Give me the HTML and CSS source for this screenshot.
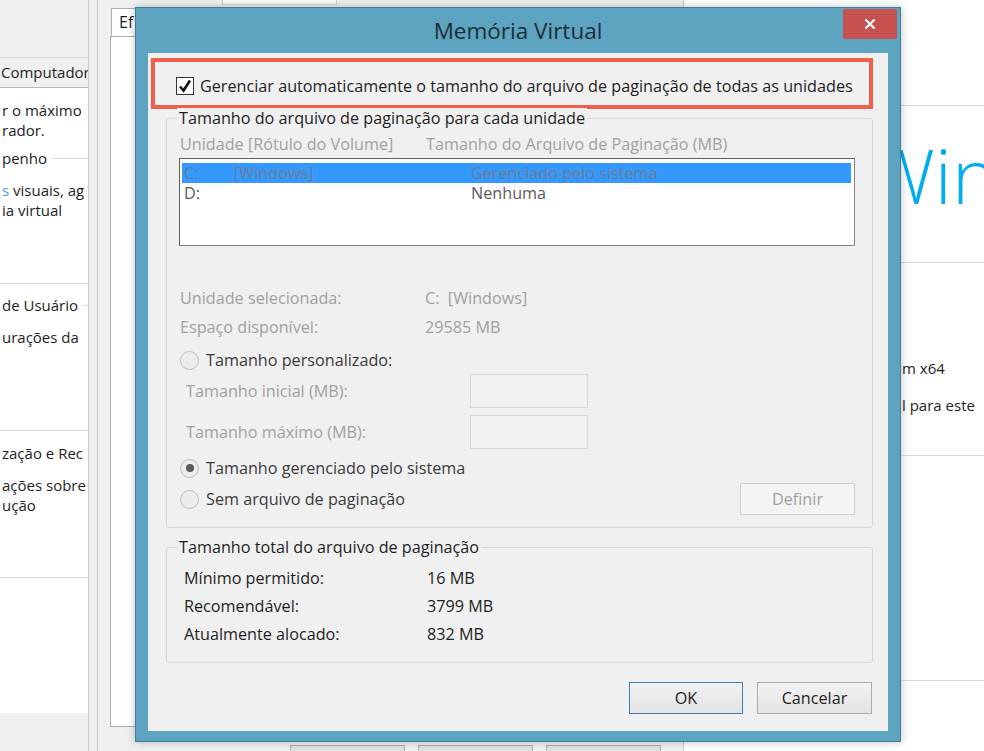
FILE: index.html
```html
<!DOCTYPE HTML>
<html>

<head>
    <meta charset="utf-8">
    <link rel="stylesheet" href="styles.css">
    <title>Memória Virtual</title>
</head>

<body>
    <!-- janela de tras, esquerda -->
    <div class="win win-left">
        <div class="left-top"></div>
        <div class="left-tabs">Computador</div>
        <div class="left-page">
            <div class="left-sec sec1">
                <p class="ln">r o máximo</p>
                <p class="ln">rador.</p>
                <p class="ln grp mt8">penho</p>
                <p class="ln mt12"><span class="link">s</span> visuais, ag</p>
                <p class="ln">ia virtual</p>
            </div>
            <div class="left-sec sec2">
                <p class="ln grp">de Usuário</p>
                <p class="ln mt12">urações da</p>
            </div>
            <div class="left-sec sec3">
                <p class="ln">zação e Rec</p>
                <p class="ln mt12">ações sobre</p>
                <p class="ln">ução</p>
            </div>
        </div>
    </div>

    <!-- janela de tras, meio -->
    <div class="win win-mid">
        <div class="mid-head"><span></span></div>
        <div class="mid-tab">Ef</div>
        <div class="mid-panel"></div>
        <div class="mid-buttons">
            <span></span>
            <span></span>
            <span></span>
        </div>
    </div>

    <!-- janela de tras, direita -->
    <div class="win win-right">
        <div class="r-sec r1"></div>
        <div class="r-sec r2"><p class="logo">Windows</p></div>
        <div class="r-sec r3">
            <p class="r-ln">m x64</p>
            <p class="r-ln mt17">l para este</p>
        </div>
        <div class="r-sec r4"></div>
    </div>

    <div class="dialog">
        <div class="titlebar">
            Memória Virtual
            <div class="close">
                <svg width="12" height="12" viewBox="0 0 12 12"><path d="M1.5 1.5 L10.5 10.5 M10.5 1.5 L1.5 10.5" stroke="#fff" stroke-width="2.2" fill="none"/></svg>
            </div>
        </div>
        <div class="client">
            <div class="highlight">
                <span class="checkbox">
                    <svg width="16" height="16" viewBox="0 0 16 16"><path d="M3 8.5 L6.5 12.5 L13 2.5" stroke="#111" stroke-width="2.6" fill="none"/></svg>
                </span>
                <span class="check-label">Gerenciar automaticamente o tamanho do arquivo de paginação de todas as unidades</span>
            </div>

            <div class="group g1">
                <div class="gtitle">Tamanho do arquivo de paginação para cada unidade</div>
                <div class="cols">
                    <span class="col-a">Unidade [Rótulo do Volume]</span>
                    <span>Tamanho do Arquivo de Paginação (MB)</span>
                </div>
                <div class="listbox">
                    <div class="lrow sel"><span class="c1">C:</span><span class="c2">[Windows]</span><span>Gerenciado pelo sistema</span></div>
                    <div class="lrow"><span class="c1">D:</span><span class="c2"></span><span>Nenhuma</span></div>
                </div>
                <div class="info mt42"><span class="info-l">Unidade selecionada:</span><span>C:&nbsp;&nbsp;[Windows]</span></div>
                <div class="info mt9"><span class="info-l">Espaço disponível:</span><span>29585 MB</span></div>
                <div class="opt mt13"><span class="radio"></span>Tamanho personalizado:</div>
                <div class="size mt4"><span class="size-l">Tamanho inicial (MB):</span><span class="textbox"></span></div>
                <div class="size mt7"><span class="size-l">Tamanho máximo (MB):</span><span class="textbox"></span></div>
                <div class="opt mt9"><span class="radio on"></span>Tamanho gerenciado pelo sistema</div>
                <div class="last-row">
                    <div class="opt"><span class="radio"></span>Sem arquivo de paginação</div>
                    <div class="btn disabled">Definir</div>
                </div>
            </div>

            <div class="group g2">
                <div class="gtitle">Tamanho total do arquivo de paginação</div>
                <div class="totals">
                    <div class="tot"><span class="tot-l">Mínimo permitido:</span><span>16 MB</span></div>
                    <div class="tot"><span class="tot-l">Recomendável:</span><span>3799 MB</span></div>
                    <div class="tot"><span class="tot-l">Atualmente alocado:</span><span>832 MB</span></div>
                </div>
            </div>

            <div class="actions">
                <div class="btn default">OK</div>
                <div class="btn">Cancelar</div>
            </div>
        </div>
    </div>
</body>

</html>
```

FILE: styles.css
```css
* {
    box-sizing: border-box;
}
body {
    margin: 0;
    width: 984px;
    height: 751px;
    overflow: hidden;
    position: relative;
    background-color: #f0f0f0;
    font-family: "Open Sans", "Noto Sans", sans-serif;
    font-size: 15px;
    color: #1e1e1e;
}
p {
    margin: 0;
}
.mt4 { margin-top: 4px; }
.mt7 { margin-top: 7px; }
.mt8 { margin-top: 8px; }
.mt9 { margin-top: 9px; }
.mt12 { margin-top: 12px; }
.mt13 { margin-top: 13px; }
.mt17 { margin-top: 17px; }
.mt42 { margin-top: 42px; }

/* janelas atras do dialogo */
.win {
    position: absolute;
    top: 0;
    height: 751px;
    overflow: hidden;
}
.win-left {
    left: 0;
    width: 89px;
    border-right: 1px solid #c9c9c9;
}
.left-top {
    height: 57px;
}
.left-tabs {
    height: 31px;
    border-top: 1px solid #dcdcdc;
    border-bottom: 1px solid #b9b9b9;
    padding-left: 1px;
    line-height: 29px;
    white-space: nowrap;
}
.left-page {
    height: 625px;
    background-color: #fff;
}
.left-sec {
    padding-left: 2px;
    white-space: nowrap;
    border-bottom: 1px solid #dcdcdc;
}
.sec1 { height: 196px; padding-top: 12px; }
.sec2 { height: 147px; padding-top: 11px; }
.sec3 { height: 147px; padding-top: 12px; }
.ln {
    line-height: 20px;
}
.grp {
    display: flex;
    align-items: center;
    gap: 4px;
}
.grp::after {
    content: "";
    flex: 1;
    height: 1px;
    background-color: #dcdcdc;
}
.link {
    color: #4aa0e0;
}

.win-mid {
    left: 97px;
    width: 587px;
    border-left: 1px solid #c9c9c9;
    border-right: 1px solid #c9c9c9;
    padding-left: 12px;
}
.mid-head {
    height: 8px;
}
.mid-head span {
    display: block;
    margin-left: 112px;
    width: 115px;
    height: 5px;
    background-color: #fafafa;
    border: 1px solid #d3d3d3;
    border-top: none;
}
.mid-tab {
    margin-left: 1px;
    width: 60px;
    height: 28px;
    padding-left: 7px;
    line-height: 27px;
    font-size: 16px;
    background-color: #fff;
    border: 1px solid #adadad;
    border-bottom: none;
}
.mid-panel {
    width: 563px;
    height: 691px;
    background-color: #fff;
    border: 1px solid #adadad;
}
.mid-buttons {
    display: flex;
    gap: 13px;
    margin-top: 18px;
    margin-left: 180px;
}
.mid-buttons span {
    width: 115px;
    height: 28px;
    background-color: #e1e1e1;
    border: 1px solid #adadad;
}

.win-right {
    left: 684px;
    width: 300px;
    padding-left: 217px;
    background-color: #fff;
    white-space: nowrap;
}
.r-sec {
    border-bottom: 1px solid #dadada;
}
.r1 { height: 106px; }
.r2 { height: 157px; padding-top: 31px; overflow: hidden; }
.r3 { height: 193px; padding-top: 95px; }
.r4 { height: 225px; }
.logo {
    margin-left: -34px;
    font-size: 76px;
    font-weight: 300;
    line-height: 76px;
    color: #00aeef;
}
.r-ln {
    margin-left: 1px;
    line-height: 20px;
}

/* dialogo */
.dialog {
    position: absolute;
    left: 135px;
    top: 7px;
    width: 766px;
    height: 735px;
    display: flex;
    flex-direction: column;
    font-size: 16.2px;
    background-color: #5ca4bf;
    border: 1px solid #3f7f97;
    box-shadow: 0 0 8px rgba(0, 0, 0, 0.25);
}
.titlebar {
    position: relative;
    height: 45px;
    padding-top: 6px;
    line-height: 34px;
    text-align: center;
    font-size: 22.5px;
    color: #1f2d35;
}
.close {
    position: absolute;
    top: 1px;
    right: 3px;
    width: 54px;
    height: 30px;
    display: flex;
    align-items: center;
    justify-content: center;
    background-color: #c75050;
}
.close svg {
    display: block;
}
.client {
    flex: 1;
    margin: 0 12px 10px 12px;
    background-color: #f0f0f0;
}

.highlight {
    display: flex;
    align-items: center;
    margin: 5px 0 0 3px;
    width: 722px;
    height: 51px;
    padding: 4px 0 0 21px;
    border: 4px solid #ef5f49;
}
.checkbox {
    width: 18px;
    height: 18px;
    display: flex;
    align-items: center;
    justify-content: center;
    background-color: #fff;
    border: 1px solid #333;
}
.check-label {
    margin-left: 6px;
    white-space: nowrap;
}

.group {
    margin-left: 18px;
    width: 707px;
    border: 1px solid #d5d5d5;
    border-radius: 3px;
}
.g1 {
    margin-top: 9px;
    height: 410px;
}
.g2 {
    margin-top: 19px;
    height: 116px;
}
.gtitle {
    display: table;
    margin: -11px 0 0 10px;
    padding: 0 2px;
    line-height: 20px;
    white-space: nowrap;
    background-color: #f0f0f0;
}
.cols {
    display: flex;
    margin-top: 6px;
    padding-left: 13px;
    line-height: 20px;
    white-space: nowrap;
    color: #a0a0a0;
}
.col-a {
    width: 246px;
}
.listbox {
    margin: 4px 0 0 12px;
    width: 676px;
    height: 88px;
    padding: 4px 3px 0 2px;
    background-color: #fff;
    border: 1px solid #828282;
    border-top-color: #5e5e5e;
    border-left-color: #5e5e5e;
}
.lrow {
    display: flex;
    height: 20px;
    padding-left: 2px;
    line-height: 20px;
    color: #5a5a5a;
}
.lrow.sel {
    background-color: #3399ff;
    color: #6b7c92;
}
.c1 { width: 50px; }
.c2 { width: 237px; }
.info {
    display: flex;
    padding-left: 13px;
    line-height: 20px;
    color: #a0a0a0;
}
.info-l {
    width: 245px;
}
.opt {
    display: flex;
    align-items: center;
    gap: 7px;
    height: 20px;
    padding-left: 13px;
    white-space: nowrap;
    color: #3a3a3a;
}
.radio {
    flex: none;
    width: 19px;
    height: 19px;
    display: flex;
    align-items: center;
    justify-content: center;
    border-radius: 50%;
    background-color: #ececec;
    border: 1px solid #bdbdbd;
}
.radio.on::after {
    content: "";
    width: 8px;
    height: 8px;
    border-radius: 50%;
    background-color: #5a5a5a;
}
.size {
    display: flex;
    align-items: center;
    height: 34px;
    padding-left: 19px;
    color: #a0a0a0;
}
.size-l {
    width: 284px;
}
.textbox {
    width: 118px;
    height: 34px;
    background-color: #f2f2f2;
    border: 1px solid #d6d6d6;
}
.last-row {
    display: flex;
    align-items: center;
    justify-content: space-between;
    margin-top: 5px;
    padding-right: 17px;
}
.btn {
    width: 114px;
    height: 32px;
    line-height: 30px;
    text-align: center;
    background: linear-gradient(#f2f2f2, #e3e3e3);
    border: 1px solid #acacac;
}
.btn.disabled {
    width: 115px;
    background: #f4f4f4;
    border-color: #d0d0d0;
    color: #a0a0a0;
}
.btn.default {
    border-color: #3c7fb1;
}
.totals {
    margin-top: 7px;
}
.tot {
    display: flex;
    padding-left: 17px;
    line-height: 28px;
}
.tot-l {
    width: 243px;
}
.actions {
    display: flex;
    justify-content: flex-end;
    gap: 14px;
    margin-top: 19px;
    padding-right: 16px;
}
.actions .btn + .btn {
    width: 115px;
}
```
